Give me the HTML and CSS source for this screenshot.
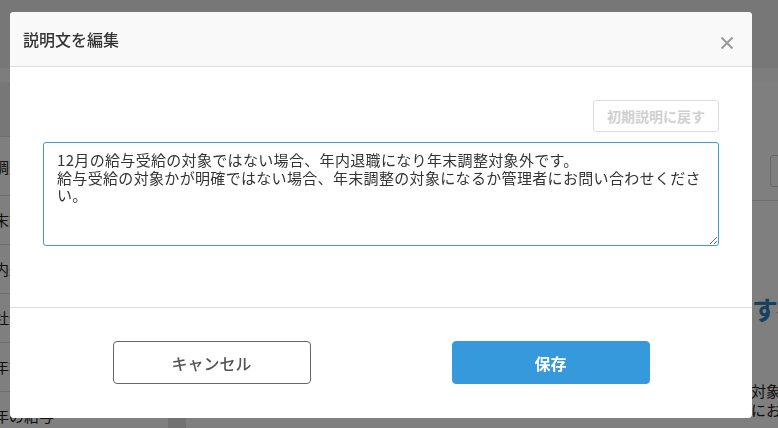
FILE: index.html
```html
<!DOCTYPE html>
<html lang="ja">
<head>
    <meta charset="UTF-8">
    <meta name="viewport" content="width=device-width, initial-scale=1.0">
    <title>説明文を編集</title>
    <link rel="stylesheet" href="styles.css">
</head>
<body>
    <!-- Page behind the dialog -->
    <div class="page">
        <div class="page-head"></div>
        <div class="page-tabs"></div>
        <div class="page-main">
            <ul class="side-menu">
                <li class="side-top"></li>
                <li class="side-first">調整について</li>
                <li>末調整</li>
                <li>内退職</li>
                <li>社保険</li>
                <li>年調整</li>
                <li>年の給与</li>
            </ul>
            <div class="content">
                <div class="toolbar"><span class="search"></span></div>
                <h2 class="headline">すべて</h2>
                <p class="lead">対象となります<br>にお問い合わせ</p>
            </div>
        </div>
    </div>

    <!-- Dialog -->
    <div class="overlay">
        <div class="modal">
            <div class="modal-header">
                <h3 class="modal-title">説明文を編集</h3>
                <button class="close-btn" aria-label="閉じる">
                    <svg width="14" height="14" viewBox="0 0 14 14">
                        <path d="M1.5 1.5L12.5 12.5M12.5 1.5L1.5 12.5" stroke="#9a9a9a" stroke-width="2" fill="none"/>
                    </svg>
                </button>
            </div>
            <div class="modal-body">
                <div class="reset-row">
                    <button class="reset-btn" disabled>初期説明に戻す</button>
                </div>
                <textarea class="desc-input">12月の給与受給の対象ではない場合、年内退職になり年末調整対象外です。
給与受給の対象かが明確ではない場合、年末調整の対象になるか管理者にお問い合わせください。</textarea>
            </div>
            <div class="modal-footer">
                <button class="btn btn-cancel">キャンセル</button>
                <button class="btn btn-save">保存</button>
            </div>
        </div>
    </div>

    <script>
        // put the caret at the end of the text
        const input = document.querySelector('.desc-input');
        input.focus();
        input.setSelectionRange(input.value.length, input.value.length);
    </script>
</body>
</html>
```

FILE: styles.css
```css
body {
    margin: 0;
    font-family: "Noto Sans CJK JP", "Noto Sans", sans-serif;
    color: #222;
}

/* page behind the dialog */
.page {
    height: 428px;
    overflow: hidden;
    background-color: #fff;
}
.page-head {
    height: 68px;
    background-color: #eee;
}
.page-tabs {
    height: 14px;
    background-color: #fafafa;
}
.page-main {
    display: flex;
}
.side-menu {
    width: 168px;
    margin: 0;
    padding: 0;
    list-style: none;
    border-right: 18px solid #e4e4e4;
    white-space: nowrap;
    overflow: hidden;
}
.side-menu li {
    height: 48px;
    line-height: 48px;
    border-bottom: 1px solid #ddd;
    margin-left: -6px;
    font-size: 15px;
}
.side-menu .side-top {
    height: 54px;
    background-color: #eee;
}
.side-menu .side-first {
    height: 58px;
    line-height: 60px;
}
.content {
    flex: 1;
    padding-left: 566px;
    white-space: nowrap;
    overflow: hidden;
}
.toolbar {
    height: 119px;
    box-sizing: border-box;
    padding-top: 73px;
    border-bottom: 1px solid #ddd;
}
.search {
    display: block;
    margin-left: 18px;
    width: 200px;
    height: 30px;
    border: 1px solid #ccc;
    border-radius: 3px;
}
.headline {
    margin: 90px 0 0;
    font-size: 26px;
    line-height: 36px;
    color: #2e80be;
}
.lead {
    margin: 54px 0 0 -1px;
    font-size: 15px;
    line-height: 19px;
}

/* dialog */
.overlay {
    position: fixed;
    inset: 0;
    background-color: rgba(0, 0, 0, 0.5);
}
.modal {
    width: 742px;
    margin: 12px 0 0 10px;
    background-color: #fff;
    border-radius: 4px;
    overflow: hidden;
}
.modal-header {
    height: 54px;
    display: flex;
    align-items: center;
    justify-content: space-between;
    padding: 0 18px 0 13px;
    background-color: #f9f9f9;
    border-bottom: 1px solid #ddd;
}
.modal-title {
    margin: 0;
    font-size: 16px;
    font-weight: 500;
    color: #333;
}
.close-btn {
    width: 14px;
    height: 14px;
    margin-top: 8px;
    padding: 0;
    border: 0;
    background: none;
    display: flex;
}
.modal-body {
    padding: 33px 33px 61px;
}
.reset-row {
    display: flex;
    justify-content: flex-end;
    margin-bottom: 10px;
}
.reset-btn {
    height: 32px;
    padding: 0 13px;
    font-family: inherit;
    font-size: 14px;
    font-weight: 700;
    color: #d0d0d0;
    background-color: #fff;
    border: 1px solid #ddd;
    border-radius: 3px;
}
.desc-input {
    display: block;
    width: 100%;
    height: 104px;
    box-sizing: border-box;
    padding: 8px 13px;
    font-family: inherit;
    font-size: 15px;
    letter-spacing: 0.33px;
    line-height: 17.5px;
    color: #333;
    caret-color: #333;
    border: 1px solid #3d9bdb;
    border-radius: 3px;
    outline: none;
}
.modal-footer {
    display: flex;
    justify-content: center;
    gap: 141px;
    padding: 33px 0 34px;
    border-top: 1px solid #ddd;
}
.btn {
    width: 198px;
    height: 43px;
    font-family: inherit;
    font-size: 16px;
    border-radius: 4px;
}
.btn-cancel {
    color: #555;
    font-weight: 500;
    background-color: #fff;
    border: 1px solid #666;
}
.btn-save {
    color: #fff;
    font-weight: 700;
    background-color: #3699dc;
    border: 1px solid #3699dc;
}
```
